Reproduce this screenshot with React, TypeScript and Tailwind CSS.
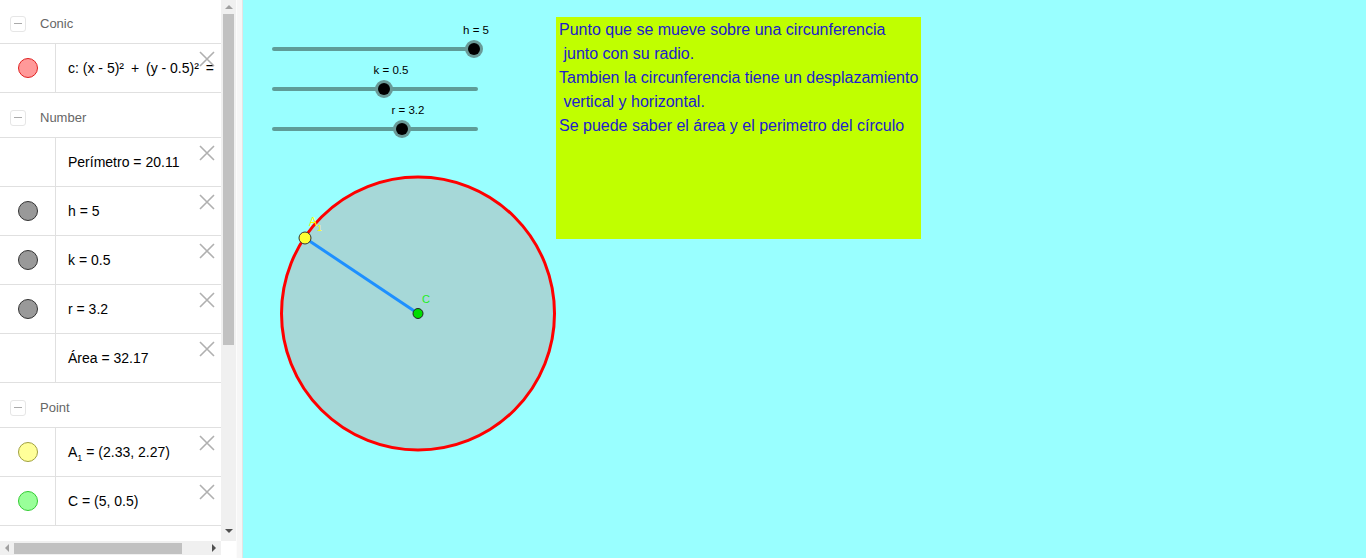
import React from "react";

type Item = {
  id: string;
  marble?: { fill: string; stroke: string };
  label: React.ReactNode;
};

type Group = { title: string; items: Item[] };

// operators in the algebra view get a little extra room, like the math renderer
const Op = ({ children }: { children: React.ReactNode }) => <span className="mx-[3px]">{children}</span>;

const groups: Group[] = [
  {
    title: "Conic",
    items: [
      {
        id: "c",
        marble: { fill: "#ff9999", stroke: "#e02020" },
        label: (
          <span>
            c: (x - 5)² <Op>+</Op> (y - 0.5)² <Op>=</Op> 10.24
          </span>
        ),
      },
    ],
  },
  {
    title: "Number",
    items: [
      { id: "per", label: <span>Perímetro = 20.11</span> },
      { id: "h", marble: { fill: "#999999", stroke: "#333333" }, label: <span>h = 5</span> },
      { id: "k", marble: { fill: "#999999", stroke: "#333333" }, label: <span>k = 0.5</span> },
      { id: "r", marble: { fill: "#999999", stroke: "#333333" }, label: <span>r = 3.2</span> },
      { id: "area", label: <span>Área = 32.17</span> },
    ],
  },
  {
    title: "Point",
    items: [
      {
        id: "a1",
        marble: { fill: "#ffff99", stroke: "#a0a040" },
        label: (
          <span>
            A<sub className="text-[9px] align-[-2px]">1</sub> = (2.33, 2.27)
          </span>
        ),
      },
      { id: "cp", marble: { fill: "#99ff99", stroke: "#33cc33" }, label: <span>C = (5, 0.5)</span> },
    ],
  },
];

function CloseX() {
  return (
    <svg width="18" height="18" viewBox="0 0 18 18" className="absolute right-[5px] top-[6px]">
      <path d="M2 2 L16 16 M16 2 L2 16" stroke="#b0b0b0" strokeWidth="1.6" />
    </svg>
  );
}

function GroupHeader({ title }: { title: string }) {
  return (
    <div className="h-[45px] flex items-center pt-[5px] border-b border-[#e0e0e0]">
      <div className="ml-[10px] w-[16px] h-[16px] border border-[#e6e6e6] rounded-[3px] flex items-center justify-center">
        <div className="w-[8px] h-[1px] bg-[#aaaaaa]" />
      </div>
      <span className="ml-[14px] text-[13px] text-[#666666]">{title}</span>
    </div>
  );
}

function ItemRow({ item }: { item: Item }) {
  return (
    <div className="h-[49px] flex border-b border-[#e0e0e0] relative">
      <div className="w-[56px] shrink-0 border-r border-[#e0e0e0] flex items-center justify-center">
        {item.marble && (
          <div
            className="w-[20px] h-[20px] rounded-full border"
            style={{ background: item.marble.fill, borderColor: item.marble.stroke }}
          />
        )}
      </div>
      <div className="flex-1 flex items-center pl-[12px] text-[14px] text-[#000] whitespace-nowrap overflow-hidden">
        {item.label}
      </div>
      <CloseX />
    </div>
  );
}

function AlgebraView() {
  return (
    <div className="w-[236px] h-full flex flex-col bg-white">
      <div className="flex h-[541px]">
        <div className="w-[221px] overflow-hidden">
          {groups.map((g, gi) => (
            <div key={g.title}>
              <div className={gi === 0 ? "-mt-[1px]" : ""}>
                <GroupHeader title={g.title} />
              </div>
              {g.items.map((it) => (
                <ItemRow key={it.id} item={it} />
              ))}
            </div>
          ))}
        </div>
        <div className="w-[15px] bg-[#f0f0f0] flex flex-col items-center">
          <div className="h-[14px] flex items-center justify-center">
            <div className="w-0 h-0 border-l-[4px] border-r-[4px] border-b-[4px] border-l-transparent border-r-transparent border-b-[#a0a0a0]" />
          </div>
          <div className="w-[11px] h-[331px] bg-[#c1c1c1]" />
          <div className="flex-1" />
          <div className="h-[14px] flex items-center justify-center mb-[3px]">
            <div className="w-0 h-0 border-l-[4px] border-r-[4px] border-t-[4px] border-l-transparent border-r-transparent border-t-[#505050]" />
          </div>
        </div>
      </div>
      <div className="flex h-[17px]">
        <div className="w-[221px] h-[14px] bg-[#f0f0f0] flex items-center">
          <div className="w-[14px] flex justify-center">
            <div className="w-0 h-0 border-t-[4px] border-b-[4px] border-r-[4px] border-t-transparent border-b-transparent border-r-[#a0a0a0]" />
          </div>
          <div className="w-[168px] h-[11px] bg-[#c1c1c1]" />
          <div className="flex-1" />
          <div className="w-[14px] flex justify-center">
            <div className="w-0 h-0 border-t-[4px] border-b-[4px] border-l-[4px] border-t-transparent border-b-transparent border-l-[#505050]" />
          </div>
        </div>
        <div className="w-[15px] bg-white" />
      </div>
    </div>
  );
}

const sliders = [
  { y: 49, knob: 474, label: "h = 5", lx: 476, ly: 34 },
  { y: 89, knob: 384, label: "k = 0.5", lx: 391, ly: 74 },
  { y: 129, knob: 402, label: "r = 3.2", lx: 408, ly: 114 },
];

function Canvas() {
  return (
    <div className="flex-1 relative bg-[#99ffff] overflow-hidden">
      <svg
        width="1123"
        height="558"
        viewBox="243 0 1123 558"
        className="absolute left-0 top-0"
        style={{ fontFamily: "'Liberation Sans', Arial, sans-serif" }}
      >
        {sliders.map((s) => (
          <g key={s.label}>
            <line x1="274" y1={s.y} x2="476" y2={s.y} stroke="#5f9c98" strokeWidth="4" strokeLinecap="round" />
            <circle cx={s.knob} cy={s.y} r="9" fill="#6a9a97" />
            <circle cx={s.knob} cy={s.y} r="6" fill="#000" />
            <text x={s.lx} y={s.ly} fontSize="11.5" textAnchor="middle" fill="#000">
              {s.label}
            </text>
          </g>
        ))}

        <circle cx="418" cy="313.5" r="136.5" fill="#a6d8d8" stroke="#ff0000" strokeWidth="3" />
        <line x1="305" y1="238" x2="418" y2="313.5" stroke="#1e90ff" strokeWidth="3" />
        <circle cx="305" cy="238" r="6" fill="#ffff33" stroke="#333" strokeWidth="1" />
        <circle cx="418" cy="313.5" r="5" fill="#00dd00" stroke="#222" strokeWidth="1" />
        <text x="309" y="226" fontSize="12" fill="#ffff00">A</text>
        <text x="317" y="231" fontSize="9" fill="#ffff00">1</text>
        <text x="422" y="303" fontSize="11" fill="#22ee22">C</text>
      </svg>

      <div
        className="absolute left-[313px] top-[17px] w-[365px] h-[222px] bg-[#c0ff00] pl-[3px] pt-[1px] text-[16px] leading-[24px] text-[#2020cc] whitespace-pre"
        style={{ fontFamily: "'Liberation Sans', Arial, sans-serif" }}
      >
        <div>Punto que se mueve sobre una circunferencia</div>
        <div> junto con su radio.</div>
        <div>Tambien la circunferencia tiene un desplazamiento</div>
        <div> vertical y horizontal.</div>
        <div>Se puede saber el área y el perimetro del círculo</div>
      </div>
    </div>
  );
}

export default function App() {
  return (
    <div
      className="w-[1366px] h-[558px] flex overflow-hidden bg-white"
      style={{ fontFamily: "'Liberation Sans', Arial, sans-serif" }}
    >
      <AlgebraView />
      <div className="w-[7px] h-full bg-[#f6f6f6] border-l border-[#fcfcfc] border-r border-r-[#e4e4e4]" />
      <Canvas />
    </div>
  );
}
